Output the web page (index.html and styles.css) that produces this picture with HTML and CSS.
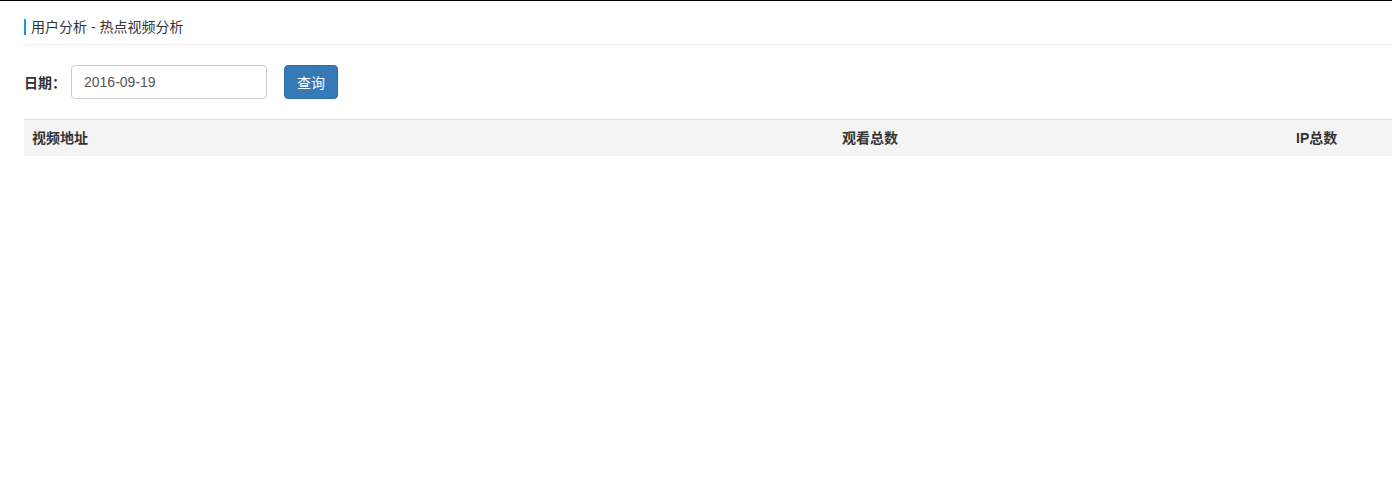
FILE: index.html
```html
<!DOCTYPE html>
<html lang="zh-CN">
<head>
  <meta charset="UTF-8">
  <title>热点视频分析</title>
  <link rel="stylesheet" href="styles.css">
</head>
<body>
  <div class="page">
    <div class="crumb">
      <span class="crumb-text">用户分析 - 热点视频分析</span>
    </div>
    <form class="search">
      <label for="date">日期：</label>
      <input type="text" id="date" value="2016-09-19">
      <button type="button">查询</button>
    </form>
    <table class="grid">
      <thead>
        <tr>
          <th class="col-url">视频地址</th>
          <th class="col-views">观看总数</th>
          <th class="col-ip">IP总数</th>
        </tr>
      </thead>
      <tbody></tbody>
    </table>
  </div>
</body>
</html>
```

FILE: styles.css
```css
body {
  margin: 0;
  font-family: "Liberation Sans", Arial, "Noto Sans CJK SC", sans-serif;
  font-size: 14px;
  color: #333;
  background: #fff;
  border-top: 1px solid #000;
}
.page {
  padding-left: 24px;
}
.crumb {
  height: 43px;
  display: flex;
  align-items: center;
  border-bottom: 1px solid #eee;
}
.crumb-text {
  border-left: 2px solid #1a9bc9;
  padding-left: 5px;
  line-height: 16px;
  margin-top: 9px;
  color: #333;
}
.search {
  display: flex;
  align-items: center;
  margin-top: 20px;
  height: 34px;
}
label {
  font-weight: bold;
  color: #333;
}
input[type="text"] {
  width: 196px;
  height: 34px;
  box-sizing: border-box;
  padding: 6px 12px;
  border: 1px solid #ccc;
  border-radius: 4px;
  font-family: inherit;
  font-size: 14px;
  color: #555;
  margin-left: 5px;
}
button {
  margin-left: 17px;
  height: 34px;
  width: 54px;
  padding: 0;
  background-color: #337ab7;
  border: 1px solid #2e6da4;
  border-radius: 4px;
  color: #fff;
  font-family: inherit;
  font-size: 14px;
}
.grid {
  margin-top: 20px;
  width: 100%;
  border-collapse: collapse;
}
.grid th {
  background: #f4f4f4;
  border-top: 1px solid #ddd;
  text-align: left;
  font-weight: bold;
  padding: 8px;
  line-height: 20px;
  color: #333;
}
.col-url {
  width: 794px;
}
.col-views {
  width: 438px;
}
```
